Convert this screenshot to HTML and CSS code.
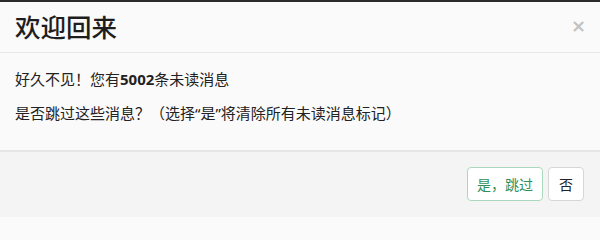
FILE: index.html
```html
<!DOCTYPE html>
<html lang="zh">
<head>
<meta charset="utf-8">
<link rel="stylesheet" href="styles.css">
</head>
<body>
<div class="modal">
  <div class="modal-header">
    <h3 class="title">欢迎回来</h3>
    <span class="close">×</span>
  </div>
  <div class="modal-body">
    <p>好久不见！您有<b>5002</b>条未读消息</p>
    <p>是否跳过这些消息？（选择“是”将清除所有未读消息标记）</p>
  </div>
  <div class="modal-footer">
    <button class="btn btn-primary">是，跳过</button>
    <button class="btn">否</button>
  </div>
</div>
</body>
</html>
```
FILE: styles.css
```css
html, body {
  margin: 0;
  padding: 0;
  background: #fafafa;
}
body {
  font-family: "Noto Sans", "Noto Sans CJK SC", sans-serif;
  color: #222;
}
.modal {
  width: 600px;
  height: 217px;
  border-top: 2px solid #2a2a2a;
  box-sizing: border-box;
  display: flex;
  flex-direction: column;
  background: #fafafa;
}
.modal-header {
  height: 51px;
  display: flex;
  align-items: center;
  justify-content: space-between;
  padding: 0 15px 0 15px;
  border-bottom: 1px solid #e8e8e8;
  box-sizing: border-box;
  flex: none;
}
.title {
  margin: 0;
  font-family: "Noto Sans CJK SC", sans-serif;
  font-size: 25.5px;
  font-weight: 500;
  line-height: 1;
  color: #1e1e1e;
  margin-top: -2px;
}
.close {
  font-size: 18px;
  font-weight: 700;
  color: #c2c2c2;
  font-family: "DejaVu Sans", sans-serif;
  line-height: 1;
  margin-top: -2px;
  margin-right: -1px;
}
.modal-body {
  padding: 16px 15px 0;
  height: 99px;
  box-sizing: border-box;
  border-bottom: 2px solid #e6e6e6;
  flex: none;
}
.modal-body p {
  margin: 0 0 14px;
  font-size: 15px;
  line-height: 20px;
  color: #222;
}
.modal-body b {
  font-weight: 700;
}
.modal-footer {
  flex: 1;
  background: #f4f4f4;
  display: flex;
  justify-content: flex-end;
  align-items: flex-start;
  gap: 5px;
  padding: 15px 16px 0 0;
}
.btn {
  height: 34px;
  padding: 0 10px;
  font-family: "Noto Sans CJK SC", sans-serif;
  font-size: 14px;
  color: #222;
  background: #ffffff;
  border: 1px solid #d6d6d6;
  border-radius: 4px;
}
.btn-primary {
  color: #2f8f5b;
  border-color: #a9d8bd;
  padding: 0 9px;
}
```
